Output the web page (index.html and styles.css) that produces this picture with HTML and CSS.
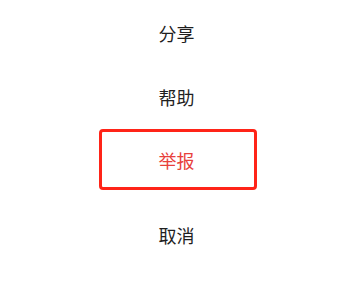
FILE: index.html
```html
<!DOCTYPE html>
<html lang="zh">
<head>
<meta charset="utf-8">
<link rel="stylesheet" href="styles.css">
</head>
<body>
<div class="sheet">
  <div class="item item-first">分享</div>
  <div class="item item-second">帮助</div>
  <div class="item item-report">举报</div>
  <div class="item item-cancel">取消</div>
</div>
</body>
</html>
```
FILE: styles.css
```css
html, body {
  margin: 0;
  padding: 0;
  background: #ffffff;
}
.sheet {
  width: 158px;
  margin-left: 99px;
  display: flex;
  flex-direction: column;
  font-family: "Noto Sans CJK SC", "Noto Sans", sans-serif;
  font-size: 18px;
  color: #1f1f1f;
}
.item {
  display: flex;
  align-items: center;
  justify-content: center;
  padding-right: 3px;
  box-sizing: border-box;
}
.item-first {
  height: 65px;
}
.item-second {
  height: 64px;
}
.item-report {
  height: 61px;
  border: 3px solid #ff2418;
  border-radius: 4px;
  color: #e8403b;
}
.item-cancel {
  height: 65px;
  margin-top: 12px;
}
```
